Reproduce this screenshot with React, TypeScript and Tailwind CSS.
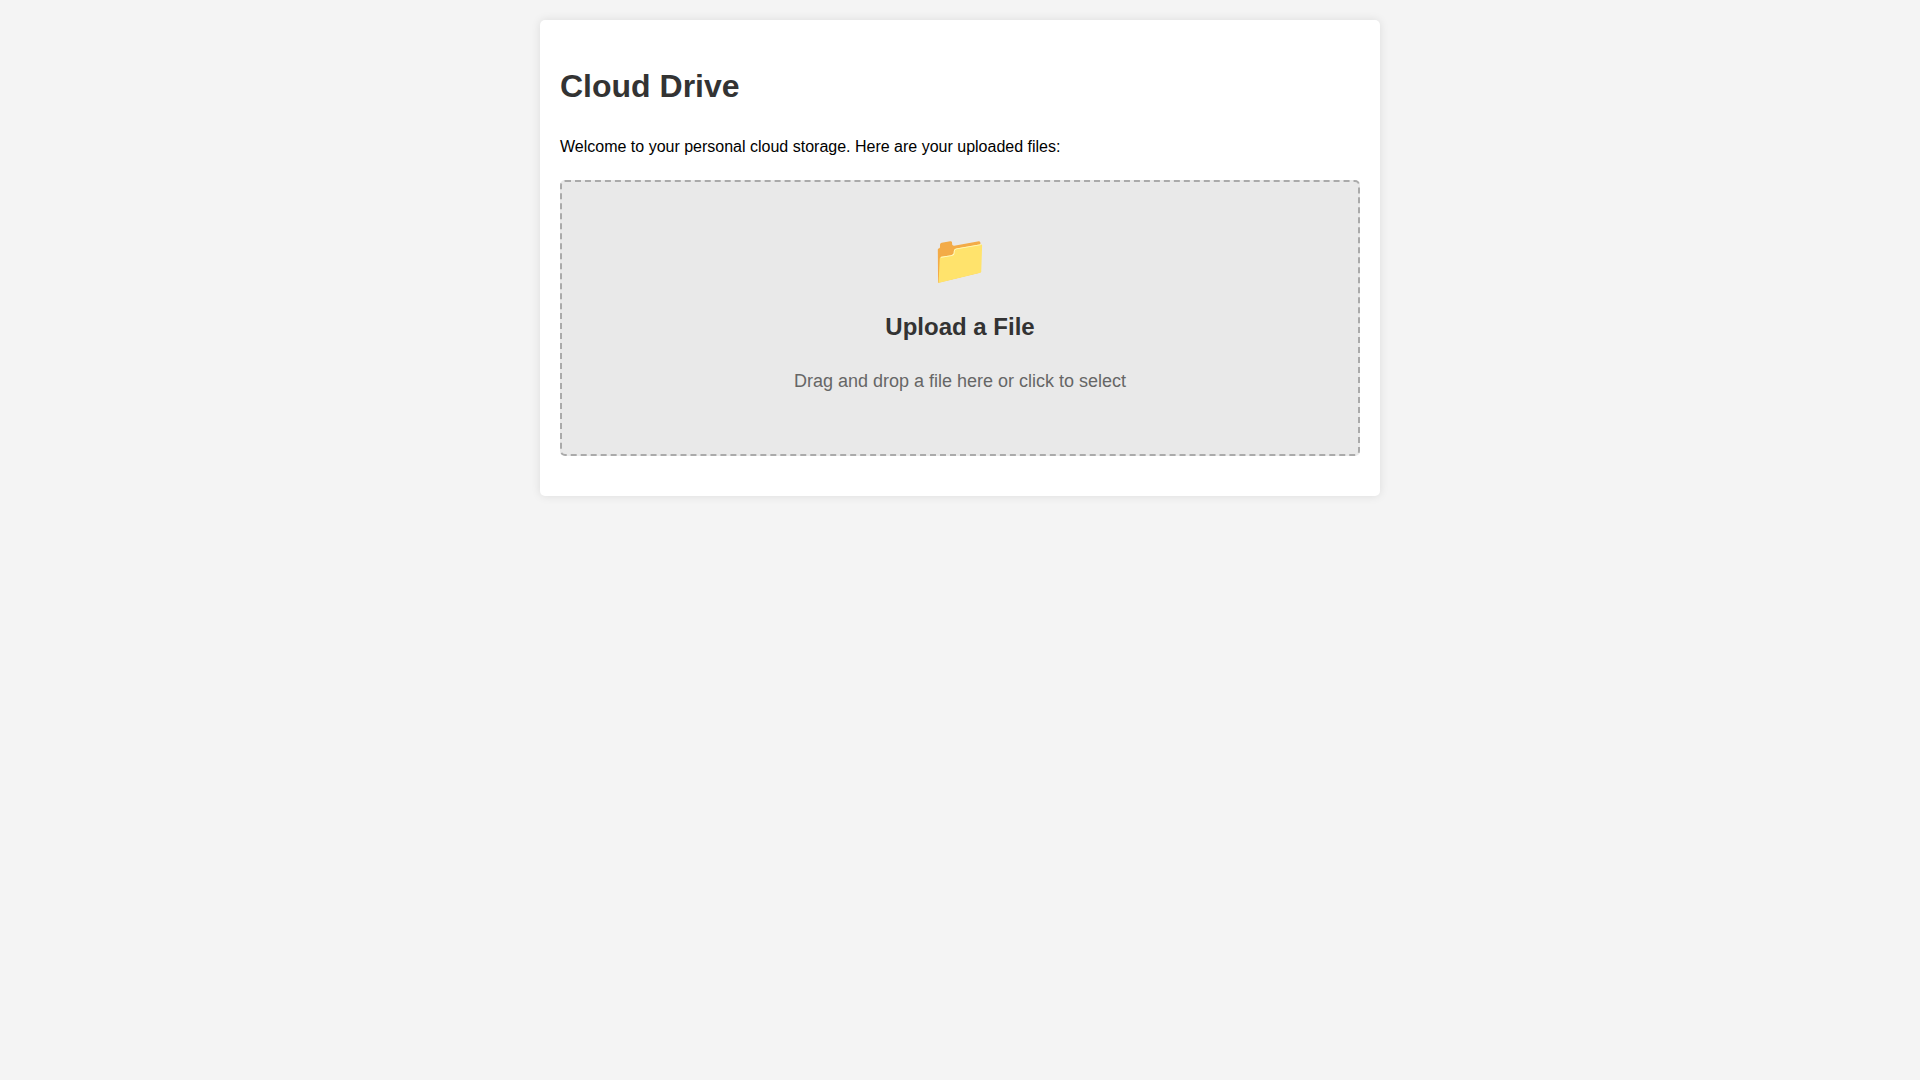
const App = () => {
  return (
    <div className="min-h-screen bg-[#f4f4f4] p-5 font-['Liberation_Sans',Arial,sans-serif] text-base text-black">
      <main className="mx-auto max-w-[840px] rounded-[5px] bg-white px-5 pt-10 pb-10 shadow-[0_0_10px_rgba(0,0,0,0.1)]">
        <h1 className="mb-[22px] text-[32px] leading-[52px] font-bold text-[#333]">
          Cloud Drive
        </h1>
        <p className="mb-5 leading-[26px]">
          Welcome to your personal cloud storage. Here are your uploaded files:
        </p>
        <label
          htmlFor="file"
          className="block cursor-pointer rounded-[5px] border-2 border-dashed border-[#aaa] bg-[#e9e9e9] px-10 pt-10 pb-[58px] text-center"
        >
          <span className="mb-[10px] block text-[48px] leading-[76px]">📁</span>
          <span className="mb-5 block text-2xl leading-[38px] font-bold text-[#333]">
            Upload a File
          </span>
          <span className="block text-lg leading-[30px] text-[#666]">
            Drag and drop a file here or click to select
          </span>
          <input id="file" type="file" className="sr-only" />
        </label>
      </main>
    </div>
  );
};

export default App;
